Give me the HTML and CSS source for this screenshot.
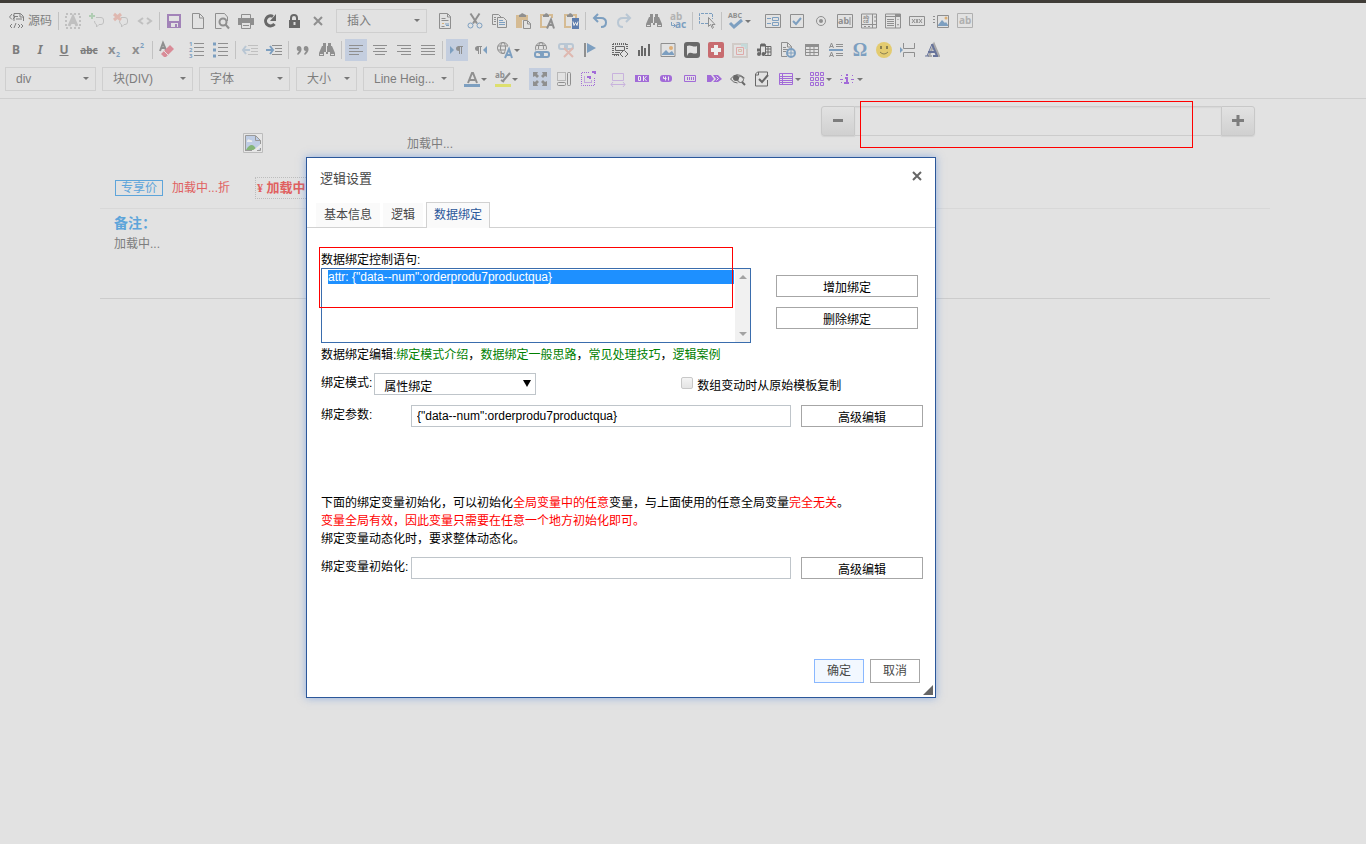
FILE: index.html
```html
<!DOCTYPE html>
<html lang="zh-CN">
<head>
<meta charset="utf-8">
<meta name="viewport" content="width=device-width, initial-scale=1">
<title>逻辑设置</title>
<link rel="stylesheet" href="styles.css">
</head>
<body>
<header class="editor">
  <div class="bar bar-first" role="toolbar" aria-label="文档工具">
    <button class="tool source"><svg viewBox="0 0 16 16"><path d="M5 8V.5h6.500l3 3V8M11 1v3h3M5.500 3.500H9M7 6h6" /><path d="M3 1 .5 4 3 6.500M4 2l2 2-2 2M3 11l-2 2 2 2M7 10l-2 5M9 11l2 2-2 2M12 11l2 2-2 2"/></svg><span>源码</span></button>
    <i class="sep"></i>
    <button class="tool off" aria-label="模板文字"><svg viewBox="0 0 16 16"><path stroke-dasharray="2 2" stroke-width="2" d="M1 1h14v14H1z"/><path stroke-width="3" d="m4 13 4-9 4 9M5.500 9.500h5"/></svg></button>
    <button class="tool off" aria-label="添加批注"><svg viewBox="0 0 16 16"><path d="M7 4.500h5q2.500 0 2.500 2.500v2q0 2.500-2.500 2.500h-2L7.500 14v-2.500Q5.500 11 5.500 8"/><path stroke="#6aae70" stroke-width="2" d="M3 0v6M0 3h6"/></svg></button>
    <button class="tool off" aria-label="删除批注"><svg viewBox="0 0 16 16"><path d="M8 4.500h4q2.500 0 2.500 2.500v2q0 2.500-2.500 2.500h-1L8.500 14v-2.500Q6.500 11 6.500 8"/><path stroke="#dc7b66" stroke-width="3" d="m1 1 7 6M8 1 1 7"/></svg></button>
    <button class="tool off" aria-label="代码"><svg viewBox="0 0 16 16"><path stroke-width="2" d="M6 5 2 8l4 3M10 5l4 3-4 3"/></svg></button>
    <i class="sep"></i>
    <button class="tool" aria-label="保存"><svg viewBox="0 0 16 16"><path fill="#a283b8" stroke="none" fill-rule="evenodd" d="M1 1h14v14H1zM3 3v5h10V3zM5 10v4h4v-3h2v3h1v-4z"/></svg></button>
    <button class="tool" aria-label="新建"><svg viewBox="0 0 16 16"><path d="M2.500.5h7l4 4v11h-11zM9.500 1v4h4"/></svg></button>
    <button class="tool" aria-label="预览"><svg viewBox="0 0 16 16"><path d="M13.500 8V4l-3-3.500h-9v15h6"/><circle cx="9" cy="9" r="3.500" stroke-width="2"/><path stroke-width="2" d="m11.500 11.500 3.500 4"/></svg></button>
    <button class="tool" aria-label="打印"><svg viewBox="0 0 16 16"><path class="f" d="M0 5h16v7h-3v-2H3v2H0z"/><path d="M3.500 5V1.500h9V5M3.500 10v5.500h9V10M5 12.500h6"/></svg></button>
    <button class="tool dark" aria-label="刷新"><svg viewBox="0 0 16 16"><path stroke-width="3" d="M11 3.500A5 5 0 1 0 12.500 11"/><path class="f" d="M14 1v7H8z"/></svg></button>
    <button class="tool dark" aria-label="锁定"><svg viewBox="0 0 16 16"><path stroke-width="2" d="M5 8V5a3 3 0 0 1 6 0v3"/><path class="f" d="M3 7h11v8H3z"/><path stroke="#ddd" stroke-width="2" d="M8.500 9v3"/></svg></button>
    <button class="tool" aria-label="关闭编辑"><svg viewBox="0 0 16 16"><path stroke-width="2" d="m4 4 8 8M12 4l-8 8"/></svg></button>
    <span class="combo combo-mid"><select aria-label="插入"><option>插入</option></select></span>
    <button class="tool" aria-label="模板"><svg viewBox="0 0 16 16"><path d="M2.500.5h8l3 3v12h-11zM10.500 1v3h3M4.500 5.500h4M4.500 7.500h7M4.500 13.500h3"/><path stroke="#7d9fc0" d="M8 11h4M9 12.500h3"/><path stroke="#d6b07c" d="M5 10.500h2"/></svg></button>
    <button class="tool next" aria-label="剪切"><svg viewBox="0 0 16 16"><path stroke-width="2" d="m3.500.5 6.500 10M12.500.5 6 10.500"/><circle class="b" cx="3.500" cy="12.500" r="2.500"/><circle class="b" cx="12.500" cy="12.500" r="2.500"/></svg></button>
    <button class="tool" aria-label="复制"><svg viewBox="0 0 16 16"><path d="M5 11.500H1.500v-10h6L10 4M3 4.500h2M3 6.500h2M3 8.500h2M6.500 4.500h6l3 3v7h-9z"/><path class="b" d="M8 7.500h4M8 9.500h6M8 11.500h6"/></svg></button>
    <button class="tool" aria-label="粘贴"><svg viewBox="0 0 16 16"><path fill="#d5bb93" stroke="none" d="M1 2h12v5H7v8H1z"/><path class="f" d="M4 4V2l2-1 1-1 2 1 2 1v2z"/><path fill="#e2e2e2" d="M8.500 7.500h4l3 3v5h-7zM12.500 8v3h3"/></svg></button>
    <button class="tool" aria-label="粘贴为文本"><svg viewBox="0 0 16 16"><path stroke="#d5bb93" stroke-width="2" d="M5 2H2v12h6M10 2h3v3"/><path class="f" d="M4 4V2l2-1 1-1 2 1 1 1v2z"/><path stroke-width="2" d="m8 15.500 4-9 3 9M9.500 12h4"/></svg></button>
    <button class="tool" aria-label="从 Word 粘贴"><svg viewBox="0 0 16 16"><path stroke="#d5bb93" stroke-width="2" d="M5 2H2v12h6M10 2h3v3"/><path class="f" d="M4 4V2l2-1 1-1 2 1 1 1v2z"/><path fill="#5d7dae" stroke="none" d="M9 5h7v11H9z"/><path stroke="#eee" d="m10 8.500 1 4 1.500-3 1.500 3 1-4"/></svg></button>
    <i class="sep"></i>
    <button class="tool" aria-label="撤销"><svg viewBox="0 0 16 16"><path class="b" stroke-width="2" d="M6 1 2 5l4 4M2 5h7q5 0 5 4.500T9 14"/></svg></button>
    <button class="tool off" aria-label="重做"><svg viewBox="0 0 16 16"><path class="b" stroke-width="2" d="m10 1 4 4-4 4M14 5H7q-5 0-5 4.500T7 14"/></svg></button>
    <button class="tool next" aria-label="查找"><svg viewBox="0 0 16 16"><path class="f" d="M4 1h3v3h2V1h3v3h1l3 7v3h-5v-4H9v2H7v-2H5v4H0v-3l3-7h1z"/><path stroke="#e2e2e2" d="M7.500 3v7M1 12.500h3M12 12.500h3"/></svg></button>
    <button class="tool" aria-label="替换"><svg viewBox="0 0 16 16"><text x="0" y="7" class="tb light" font-size="10">ab</text><text x="5" y="15" class="tb bf" font-size="10">ac</text><path class="b" d="M1.500 9v3.500H5M3.500 10.500l2 2-2 2"/></svg></button>
    <i class="sep"></i>
    <button class="tool" aria-label="全选"><svg viewBox="0 0 16 16"><path class="b" stroke-width="1" stroke-dasharray="3 1" d="M9 10.500H.5V.5h13V6"/><path fill="#e2e2e2" d="M9.500 4.500v9l2-2 2 4 1-1-1.500-3H16z"/></svg></button>
    <i class="sep"></i>
    <button class="tool drop" aria-label="拼写检查"><svg viewBox="0 0 16 16"><text x="0" y="5" class="tb" font-size="7">ABC</text><path class="b" stroke-width="3" d="m2 10 4 4 8-7"/></svg></button>
    <button class="tool next" aria-label="表单"><svg viewBox="0 0 16 16"><path d="M.5 1.500h15v13H.5z"/><path class="b" d="M7.500 4.500h6v3h-6zM7.500 9.500h6v3h-6zM2 5.500h4M2 10.500h4"/></svg></button>
    <button class="tool" aria-label="复选框"><svg viewBox="0 0 16 16"><path d="M1.500 1.500h13v13h-13z"/><path class="b" stroke-width="2" d="m4 8 3 3 5-6"/></svg></button>
    <button class="tool" aria-label="单选按钮"><svg viewBox="0 0 16 16"><circle cx="8" cy="8" r="4.500"/><circle class="f" cx="8" cy="8" r="2"/></svg></button>
    <button class="tool" aria-label="单行文本"><svg viewBox="0 0 16 16"><path d="M.5 1.500h15v13H.5zM13 4v8"/><text x="1" y="11" class="tb" font-size="9">ab</text></svg></button>
    <button class="tool" aria-label="多行文本"><svg viewBox="0 0 16 16"><path d="M.5 1h15v14H.5zM11.500 1v14M1 11.500h14M13 4h2M13 8h2M3 13.500h2M7 13.500h2"/><text x="2" y="6" class="tb" font-size="5">ab</text><text x="2" y="10" class="tb" font-size="5">cd</text></svg></button>
    <button class="tool" aria-label="列表"><svg viewBox="0 0 16 16"><path d="M.5 1h15v14H.5zM1 3.500h10M10.500 1v14M2 6.500h7M2 8.500h7M2 10.500h7M2 12.500h7"/><path class="f" d="M10 1h6v3h-6zM12 7l1-1 1 1zM12 11h2l-1 2z"/></svg></button>
    <button class="tool" aria-label="按钮"><svg viewBox="0 0 16 16"><path d="M.5 3.500h15v9H.5zM3 6l3 4M6 6l-3 4M7 6l2 4M9 6l-2 4M10 6l3 4M13 6l-3 4"/></svg></button>
    <button class="tool" aria-label="图像按钮"><svg viewBox="0 0 16 16"><path d="M4.500 2.500h11v12h-11zM0 3.500h2M0 6.500h2M0 9.500h2"/><path fill="#7d9fc0" stroke="none" d="m5 12 4-5 3 3 1-1 2 3v1H5z"/><circle cx="13" cy="5" r="1.500" fill="#dcae72" stroke="none"/></svg></button>
    <button class="tool mute" aria-label="隐藏域"><svg viewBox="0 0 16 16"><path d="M.5.5h15v14H.5z"/><text x="2" y="11" class="tb" font-size="10">ab</text></svg></button>
  </div>

  <div class="bar" role="toolbar" aria-label="格式工具">
    <button class="tool letter" aria-label="加粗"><b>B</b></button>
    <button class="tool letter" aria-label="倾斜"><em>I</em></button>
    <button class="tool letter" aria-label="下划线"><u>U</u></button>
    <button class="tool letter wide" aria-label="删除线"><s>abc</s></button>
    <button class="tool" aria-label="下标"><svg viewBox="0 0 16 16"><text x="2" y="12" class="tb" font-size="13">x</text><text x="10" y="15" class="tb bf" font-size="7">2</text></svg></button>
    <button class="tool" aria-label="上标"><svg viewBox="0 0 16 16"><text x="2" y="12" class="tb" font-size="13">x</text><text x="10" y="6" class="tb bf" font-size="7">2</text></svg></button>
    <i class="sep"></i>
    <button class="tool" aria-label="清除格式"><svg viewBox="0 0 16 16"><path stroke-width="2" d="m1 9 3-8 3 7M2 6h4"/><path fill="#d98b97" stroke="none" d="m2 12 9-9 4 4-8 8H5z"/><path stroke="#e2e2e2" d="m5 9 4 4"/></svg></button>
    <button class="tool next" aria-label="编号列表"><svg viewBox="0 0 16 16"><path d="M5 1.500h10M5 5.500h10M5 9.500h10M5 13.500h10"/><text x="0" y="4" class="tb bf" font-size="6">1</text><text x="0" y="10" class="tb bf" font-size="6">2</text><text x="0" y="16" class="tb bf" font-size="6">3</text></svg></button>
    <button class="tool" aria-label="项目列表"><svg viewBox="0 0 16 16"><path d="M5 1.500h10M5 5.500h10M5 9.500h10M5 13.500h10"/><path class="b" stroke-width="3" d="M0 2h3M0 8h3M0 14h3"/></svg></button>
    <i class="sep"></i>
    <button class="tool off" aria-label="减少缩进"><svg viewBox="0 0 16 16"><path d="M6 3.500h10M9 6.500h7M9 9.500h7M6 12.500h10"/><path class="b" stroke-width="2" d="M4 4 1 8l3 4M1 8h7"/></svg></button>
    <button class="tool" aria-label="增加缩进"><svg viewBox="0 0 16 16"><path d="M6 3.500h10M9 6.500h7M9 9.500h7M6 12.500h10"/><path class="b" stroke-width="2" d="m4 4 3 4-3 4M0 8h7"/></svg></button>
    <i class="sep"></i>
    <button class="tool" aria-label="引用"><svg viewBox="0 0 16 16"><path class="f" d="M2 5q2-2 4 0 2 4-3 8l-1-1 2-3q-3 0-2-4zM9 5q2-2 4 0 2 4-3 8l-1-1 2-3q-3 0-2-4z"/></svg></button>
    <button class="tool" aria-label="查找内容"><svg viewBox="0 0 16 16"><path class="f" d="M4 1h3v3h2V1h3v3h1l3 7v3h-5v-4H9v2H7v-2H5v4H0v-3l3-7h1z"/><path stroke="#e2e2e2" d="M7.500 3v7M1 12.500h3M12 12.500h3"/></svg></button>
    <i class="sep"></i>
    <button class="tool on" aria-label="左对齐"><svg viewBox="0 0 16 16"><path d="M1 3.500h14M1 6.500h10M1 9.500h14M1 12.500h10"/></svg></button>
    <button class="tool" aria-label="居中"><svg viewBox="0 0 16 16"><path d="M1 3.500h14M3 6.500h10M1 9.500h14M3 12.500h10"/></svg></button>
    <button class="tool" aria-label="右对齐"><svg viewBox="0 0 16 16"><path d="M1 3.500h14M5 6.500h10M1 9.500h14M5 12.500h10"/></svg></button>
    <button class="tool" aria-label="两端对齐"><svg viewBox="0 0 16 16"><path d="M1 3.500h14M1 6.500h14M1 9.500h14M1 12.500h14"/></svg></button>
    <i class="sep"></i>
    <button class="tool on" aria-label="从左到右"><svg viewBox="0 0 16 16"><path class="bfill" d="m1 4 4 4-4 4z"/><path class="f" d="M9 4h5v1H9zM10 4v5q-3 0-3-2.500T10 4z"/><path d="M10.500 4v8M12.500 4v8"/></svg></button>
    <button class="tool" aria-label="从右到左"><svg viewBox="0 0 16 16"><path class="bfill" d="m14 4-4 4 4 4z"/><path class="f" d="M4 4h5v1H4zM5 4v5Q2 9 2 6.500T5 4z"/><path d="M5.500 4v8M7.500 4v8"/></svg></button>
    <button class="tool drop" aria-label="语言"><svg viewBox="0 0 16 16"><circle cx="6" cy="6" r="5.500"/><ellipse cx="6" cy="6" rx="2.500" ry="5.500"/><path d="M1 4h10M1 8h7"/><path stroke="#e2e2e2" stroke-width="4" d="m8 16 4-9 3 9"/><path class="b" stroke-width="2" d="m8 16 4-9 3 9M9 13h5"/></svg></button>
    <button class="tool next" aria-label="插入链接"><svg viewBox="0 0 16 16"><circle cx="7" cy="6" r="5.500"/><ellipse cx="7" cy="6" rx="2.500" ry="5.500"/><path d="M2 3.500h10M2 7.500h10"/><path stroke="#e2e2e2" stroke-width="3" d="M2 9h13"/><rect class="b" x="1" y="10" width="8" height="5" rx="2" stroke-width="2"/><rect class="b" x="7" y="10" width="8" height="5" rx="2" stroke-width="2"/></svg></button>
    <button class="tool off" aria-label="取消链接"><svg viewBox="0 0 16 16"><rect class="b" x="1" y="2" width="8" height="5" rx="2" stroke-width="2"/><rect class="b" x="7" y="2" width="8" height="5" rx="2" stroke-width="2"/><path stroke="#dc7b66" stroke-width="2" d="m6 6 9 9M15 6l-9 9"/></svg></button>
    <button class="tool" aria-label="锚点"><svg viewBox="0 0 16 16"><path stroke-width="2" d="M3 1v14"/><path class="bfill" d="m5 1 9 5-9 5z"/></svg></button>
    <button class="tool dark next" aria-label="容器"><svg viewBox="0 0 16 16"><path stroke-width="2" stroke-dasharray="1 1" d="M1 2h14v5M1 2v11h7"/><path d="M3.500 4.500h9v4h-9zM3 10.500h5M3 12.500h4M11 9l-3 3 3 3M13 9l3 3-3 3"/></svg></button>
    <button class="tool dark" aria-label="图表"><svg viewBox="0 0 16 16"><path stroke-width="2" d="M3 8v6M6 4v10M9 6v8M13 2v12"/></svg></button>
    <button class="tool" aria-label="图片"><svg viewBox="0 0 16 16"><path d="M1 1.500h14v13H1z"/><path class="bfill" d="m2 12 4-4 3 3 3-2 2 3v1H2z"/><circle cx="11" cy="6" r="2" fill="#dfae75" stroke="none"/></svg></button>
    <button class="tool dark" aria-label="标记"><svg viewBox="0 0 16 16"><rect class="f" width="16" height="16" rx="3"/><path fill="#e2e2e2" stroke="none" d="M3 4q2-1 5 0t5 0v7q-2 1-5 0t-4 1l-1 2z"/></svg></button>
    <button class="tool" aria-label="添加模块"><svg viewBox="0 0 16 16"><rect fill="#c86c70" stroke="none" width="16" height="16" rx="2"/><path stroke="#eee" stroke-width="4" d="M8 3v10M3 8h10"/></svg></button>
    <button class="tool off" aria-label="图层"><svg viewBox="0 0 16 16"><path stroke="#b9a99f" stroke-width="2" d="M1 2h14v13H1z"/><path stroke="#9cc" stroke-width="3" d="M9 3h5v4"/><path stroke="#d55" d="M4.500 5.500h7v7h-7z"/><path stroke="#c85" d="M6.500 7.500h3v2h-3z"/></svg></button>
    <button class="tool dark" aria-label="媒体"><svg viewBox="0 0 16 16"><path d="M4.500 12V2.500h5V12M9.500 4.500H15v9H9M12 5v8M10 7h5M10 10h5"/><circle class="f" cx="3" cy="12" r="2"/><circle class="f" cx="7.500" cy="12" r="2"/><path stroke-width="3" d="M5 3h4M1 8h3"/></svg></button>
    <button class="tool" aria-label="网页文件"><svg viewBox="0 0 16 16"><path d="M7 14.500H1.500V.5h6l4 4V7M7.500 1v4h4M3 5.500h3M3 7.500h5M3 9.500h3"/><circle class="b" cx="11" cy="11" r="4" stroke-width="2"/><path class="b" d="M7 11h8M11 7v8"/></svg></button>
    <button class="tool" aria-label="表格"><svg viewBox="0 0 16 16"><path d="M1.500 2.500h13v11h-13zM2 7.500h12M2 10.500h12M6 5v9M10 5v9"/><path class="f" d="M1 2h14v3H1z"/></svg></button>
    <button class="tool" aria-label="水平线"><svg viewBox="0 0 16 16"><path d="m1.500 6 2-5 2 5M2 4.500h3M1.500 15l2-5 2 5M2 13.500h3M8 2.500h7M8 4.500h7M8 11.500h7M8 13.500h7"/><path class="b" stroke-width="2" d="M1 8h14"/></svg></button>
    <button class="tool omega" aria-label="特殊符号">Ω</button>
    <button class="tool" aria-label="表情"><svg viewBox="0 0 16 16"><circle cx="8" cy="8" r="8" fill="#e3cb70" stroke="none"/><path stroke="#8a7f50" stroke-width="2" d="M5 4v3M11 4v3"/><path stroke="#8a7f50" d="M4 10q4 4 8 0"/></svg></button>
    <button class="tool" aria-label="分页"><svg viewBox="0 0 16 16"><path d="M3.500 1v5.500h11V1M3.500 15v-4.500h11V15"/><path class="bfill" d="m0 5 3 3-3 3z"/></svg></button>
    <button class="tool" aria-label="字体样式"><svg viewBox="0 0 16 16"><path stroke="#a9a9a9" stroke-width="2" d="m5 14 5-12 5 12M7 10h7M4 14h4M12 14h4"/><path stroke="#68749a" stroke-width="2" d="M8 2 13 14M4 10h7M9 14h5"/><path stroke="#68749a" d="M8 2 3 14M1 14h4"/></svg></button>
  </div>

  <div class="bar" role="toolbar" aria-label="样式工具">
    <div class="combos">
      <span class="combo"><select aria-label="标签"><option>div</option></select></span>
      <span class="combo"><select aria-label="段落格式"><option>块(DIV)</option></select></span>
      <span class="combo"><select aria-label="字体"><option>字体</option></select></span>
      <span class="combo combo-size"><select aria-label="大小"><option>大小</option></select></span>
      <span class="combo"><select aria-label="行高"><option>Line Heig...</option></select></span>
    </div>
    <button class="tool drop after" aria-label="文字颜色"><svg viewBox="0 0 16 16"><path stroke-width="2" d="m4 12 4-10h1l4 10M5 9h6"/><path class="b" stroke-width="3" d="M0 14.500h16"/></svg></button>
    <button class="tool drop" aria-label="背景颜色"><svg viewBox="0 0 16 16"><text x="0" y="7" font-size="8" class="tb">ab</text><path stroke-width="2" d="m15 2-7 8M6 9l3 2"/><path stroke="#dddf6e" stroke-width="3" d="M0 14.500h16"/></svg></button>
    <button class="tool on next" aria-label="最大化"><svg viewBox="0 0 16 16"><path class="f" d="M1 1h5L5 3l2 2-2 2-2-2-2 1zM15 1v5l-2-1-2 2-2-2 2-2-1-2zM1 15v-5l2 1 2-2 2 2-2 2 1 2zM15 15h-5l1-2-2-2 2-2 2 2 2-1z"/></svg></button>
    <button class="tool" aria-label="显示区块"><svg viewBox="0 0 16 16"><path stroke-dasharray="1 1" d="M1.500 1.500h8v8h-8z"/><rect x="1.500" y="11.500" width="8" height="3" rx="1"/><rect x="11.500" y="1.500" width="3" height="13" rx="1"/></svg></button>
    <button class="tool" aria-label="定位"><svg viewBox="0 0 16 16"><path class="p" stroke-dasharray="1 1" d="M9 1.500H1.500v13h13V7M4.500 5.500v6h7v-3"/><path class="p" stroke-width="2" d="M12 1h3v2M7 6h3v2"/></svg></button>
    <button class="tool off next" aria-label="宽度"><svg viewBox="0 0 16 16"><path class="p" d="M2.500 2.500h11v7h-11zM1 13.500h14M3 11l-2 2.500L3 16M13 11l2 2.500-2 2.500"/></svg></button>
    <button class="tool" aria-label="确认按钮"><svg viewBox="0 0 16 16"><path class="pf" d="M1 4h14v7H1z"/><path stroke="#eee" d="M4.500 5.500h2v4h-2zM9.500 5v5M12.500 5l-2 2.500 2 2.500"/></svg></button>
    <button class="tool" aria-label="圆形按钮"><svg viewBox="0 0 16 16"><rect class="pf" x="2" y="4" width="12" height="7" rx="3"/><path stroke="#eee" d="M5.500 5.500v2h3M7.500 5.500v4M10.500 5.500v4"/></svg></button>
    <button class="tool" aria-label="文本域"><svg viewBox="0 0 16 16"><path class="p" d="M2.500 4.500h11v6h-11zM5.500 6v3M7.500 6v3M9.500 6v3M11.500 6v3"/></svg></button>
    <button class="tool" aria-label="流程"><svg viewBox="0 0 16 16"><path class="pf" d="M1 4h4l3 4-3 3H1zM7 4h5l4 4-4 3H7l3-3z"/><path stroke="#eee" d="m10.500 5.500 2 2-2 2"/></svg></button>
    <button class="tool dark" aria-label="检查"><svg viewBox="0 0 16 16"><path d="M.5 8q6-8 14-1M.5 8q3 4 7 4"/><circle class="f" cx="6" cy="7" r="3"/><circle cx="10.500" cy="8.500" r="3"/><path stroke-width="2" d="m12 11 3 3"/></svg></button>
    <button class="tool dark" aria-label="校验"><svg viewBox="0 0 16 16"><path d="M13.500 9v6h-12V3l2-2h10v3M4.500 1v3h-3"/><path stroke-width="2" d="m5 8 3 3 6-7"/></svg></button>
    <button class="tool drop" aria-label="数据表"><svg viewBox="0 0 16 16"><path class="p" d="M1.500 2.500h13v11h-13zM4.500 3v10M2 5.500h12M2 7.500h12M2 9.500h12M2 11.500h12"/></svg></button>
    <button class="tool drop" aria-label="网格"><svg viewBox="0 0 16 16"><path class="p" d="M1.500 1.500h3v3h-3zM6.500 1.500h3v3h-3zM11.500 1.500h3v3h-3zM1.500 6.500h3v3h-3zM6.500 6.500h3v3h-3zM11.500 6.500h3v3h-3zM1.500 11.500h3v3h-3zM6.500 11.500h3v3h-3zM11.500 11.500h3v3h-3z"/></svg></button>
    <button class="tool drop" aria-label="信息"><svg viewBox="0 0 16 16"><path class="p" stroke-width="2" d="M6 4h2M5 7h2v5M4 12h5"/><path class="p" d="m1 4 1 1M0 8.500h3M1 12l1-1M12 5l1-1M11 8.500h3M12 11l1 1"/></svg></button>
  </div>
</header>

<main class="page">
  <section class="product">
    <div class="thumb"><svg viewBox="0 0 20 20" role="img" aria-label="图片"><path stroke="#bcbcbc" fill="#e6e6e6" d="M.5.5h19v19H.5z"/><path fill="#bfcde4" stroke="none" d="M3 3h10l4 4v10H3z"/><path fill="#eee" stroke="none" d="M4 8q1-3 3-1 3 0 2 2H4z"/><path fill="#84b578" stroke="none" d="M3 17q4-7 8-4l3 4z"/><path fill="#e8e8e8" stroke="none" d="m9 18 9-7v3l-4 4z"/><path fill="none" stroke="#999" d="M2.500 17.500v-15h10l5 5V11M12.500 3v4.500h5M2 17.500h7M17.500 15v2.500H14"/></svg></div>
    <div class="name">加载中...</div>
    <div class="stepper">
      <button class="step" aria-label="减少"><svg viewBox="0 0 12 12"><path stroke-width="3" d="M1 6.500h10"/></svg></button>
      <input type="text" aria-label="数量">
      <button class="step" aria-label="增加"><svg viewBox="0 0 12 12"><path stroke-width="3" d="M0 6.500h12M6 1v11"/></svg></button>
    </div>
    <div class="prices">
      <span class="tag">专享价</span>
      <span class="discount">加载中...折</span>
      <span class="price"><small>¥</small> 加载中...</span>
    </div>
  </section>
  <section class="remark">
    <h2>备注：</h2>
    <p>加载中...</p>
  </section>
</main>

<div class="mark mark-stepper"></div>

<div class="dialog" role="dialog" aria-labelledby="dialog-title">
  <div class="dialog-head">
    <h1 id="dialog-title">逻辑设置</h1>
    <button class="close" aria-label="关闭"><svg viewBox="0 0 10 10"><path stroke-width="2" d="m1 1 8 8M9 1 1 9"/></svg></button>
  </div>
  <div class="tabs" role="tablist">
    <button class="tab" role="tab" aria-selected="false">基本信息</button>
    <button class="tab" role="tab" aria-selected="false">逻辑</button>
    <button class="tab active" role="tab" aria-selected="true">数据绑定</button>
  </div>
  <div class="dialog-body">
    <div class="bindings">
      <div class="binding-list">
        <label for="bindings">数据绑定控制语句:</label>
        <div class="listbox">
          <select id="bindings" size="4"><option selected>attr: {"data--num":orderprodu7productqua}</option></select>
          <span class="scroll" aria-hidden="true"></span>
        </div>
      </div>
      <div class="binding-actions">
        <button class="btn">增加绑定</button>
        <button class="btn">删除绑定</button>
      </div>
    </div>
    <p class="help">数据绑定编辑:<a href="#">绑定模式介绍</a>，<a href="#">数据绑定一般思路</a>，<a href="#">常见处理技巧</a>，<a href="#">逻辑案例</a></p>
    <div class="row mode-row">
      <label for="mode">绑定模式:</label>
      <span class="mode"><select id="mode"><option>属性绑定</option></select></span>
      <div class="copy"><input type="checkbox" id="copy"><label for="copy">数组变动时从原始模板复制</label></div>
    </div>
    <div class="row field-row">
      <label for="param">绑定参数:</label>
      <input type="text" id="param" value='{"data--num":orderprodu7productqua}'>
      <button class="btn">高级编辑</button>
    </div>
    <div class="notes">
      <p>下面的绑定变量初始化，可以初始化<em>全局变量中的任意</em>变量，与上面使用的任意全局变量<em>完全无关</em>。</p>
      <p><em>变量全局有效，因此变量只需要在任意一个地方初始化即可。</em></p>
      <p>绑定变量动态化时，要求整体动态化。</p>
    </div>
    <div class="row field-row">
      <label for="init">绑定变量初始化:</label>
      <input type="text" id="init">
      <button class="btn">高级编辑</button>
    </div>
  </div>
  <div class="dialog-foot">
    <button class="btn ok">确定</button>
    <button class="btn cancel">取消</button>
  </div>
  <i class="grip"></i>
  <div class="mark mark-list"></div>
</div>
</body>
</html>
```
FILE: styles.css
```css
* { box-sizing: border-box; }
body {
  margin: 0;
  min-height: 100vh;
  background: #e2e2e2;
  color: #7d7d7d;
  font: 12px/18px "Liberation Sans", "Noto Sans CJK SC", sans-serif;
}
button, input, select { font: inherit; color: inherit; margin: 0; }
button { cursor: pointer; }
h1, h2, p { margin: 0; font-weight: normal; }
svg { display: block; fill: none; stroke: currentColor; overflow: visible; }

/* Editor toolbars */
.editor {
  display: flex;
  flex-direction: column;
  gap: 5px;
  padding: 6px 5px 7px;
  border-top: 3px solid #403d38;
  border-bottom: 1px solid #cfcfcf;
}
.bar { display: flex; align-items: center; gap: 2px; height: 24px; }
.bar-first { padding-left: 1px; }
.tool {
  flex: none;
  display: flex;
  align-items: center;
  justify-content: center;
  width: 22px;
  height: 22px;
  padding: 0;
  border: 0;
  background: none;
  color: #8f8f8f;
}
.tool svg { flex: none; width: 16px; height: 16px; }
.tool text { stroke: none; fill: currentColor; }
.tool text.light { fill: #b3b3b3; }
.tool.source { width: 49px; gap: 3px; color: #808080; }
.tool.off { opacity: 0.4; }
.tool.dark { color: #686868; }
.tool.mute { color: #b0b0b0; }
.tool.on { background: #c4cedf; }
.tool.next { margin-left: 6px; }
.tool.after { margin-left: 5px; }
.tool.letter { font: 12px/22px "Noto Sans", sans-serif; color: #7d7d7d; }
.tool.letter b, .tool.letter em, .tool.letter u { font-weight: bold; }
.tool.letter.wide { width: 24px; font-size: 10px; font-weight: bold; }
.tool.omega { font: bold 18px/22px "Liberation Serif", serif; color: #7d9fc0; }
.tool.drop { width: 29px; gap: 1px; }
.tool.drop::after, .combo::after {
  content: "";
  border: 3px solid transparent;
  border-top-color: #777;
  border-bottom: 0;
}
.tool .f { fill: currentColor; stroke: none; }
.tool .b { stroke: #7d9fc0; }
.tool .bfill { fill: #7d9fc0; stroke: none; }
.tool .p { stroke: #a26bd8; }
.tool .pf { fill: #a26bd8; stroke: none; }
.tool .tb { font-family: "Noto Sans", sans-serif; font-weight: bold; }
.tool .bf { fill: #7d9fc0; }
.sep { flex: none; width: 1px; height: 18px; margin: 0 1px; background: #c2c2c2; }
.combos { display: flex; gap: 6px; }
.combo { position: relative; flex: none; width: 91px; height: 24px; }
.combo-mid { margin: 0 5px; }
.combo-size { width: 61px; }
.combo select {
  appearance: none;
  width: 100%;
  height: 24px;
  padding: 0 10px;
  border: 1px solid #cfcfcf;
  border-radius: 0;
  background: transparent;
}
.combo::after { position: absolute; right: 7px; top: 10px; pointer-events: none; }

/* Page being edited */
.page { margin: 0 96px 0 100px; }
.product {
  display: grid;
  grid-template-columns: 307px 1fr 434px;
  grid-template-rows: 71px 1fr;
  height: 110px;
  padding-right: 15px;
  border-bottom: 1px solid #d8d8d8;
}
.thumb { padding: 34px 0 0 143px; }
.thumb svg { width: 20px; height: 20px; }
.name { padding-top: 36px; }
.stepper { display: flex; height: 30px; margin-top: 7px; }
.stepper input {
  flex: 1;
  min-width: 0;
  padding: 0 8px;
  border: 1px solid #cccccc;
  border-width: 1px 0;
  background: transparent;
  box-shadow: inset 0 1px 1px #d8d8d8;
}
.step {
  display: flex;
  align-items: center;
  justify-content: center;
  width: 34px;
  padding: 0 0 2px;
  border: 1px solid #c8c8c8;
  background: linear-gradient(#e2e2e2, #d0d0d0);
  box-shadow: 0 1px 1px #d3d3d3;
}
.step:first-child { border-radius: 3px 0 0 3px; }
.step:last-child { border-radius: 0 3px 3px 0; }
.step svg { width: 12px; height: 12px; }
.prices {
  grid-column: 1 / -1;
  display: flex;
  align-items: center;
  align-self: start;
  height: 36px;
  padding-left: 15px;
  color: #e0605f;
}
.tag {
  width: 48px;
  margin-right: 9px;
  border: 1px solid #5ea5da;
  color: #5ea5da;
  line-height: 14px;
  text-align: center;
}
.discount { width: 83px; }
.price { padding: 0 1px; border: 1px dotted #bdbdbd; font: bold 13px/20px "Liberation Sans", "Noto Sans CJK SC", sans-serif; }
.price small { font: bold 12px/20px "Liberation Serif", serif; }
.remark { height: 90px; padding: 4px 14px; border-bottom: 1px solid #cccccc; }
.remark h2 { color: #5ea5da; font-size: 14px; font-weight: bold; line-height: 20px; }
.remark p { padding-top: 2px; }

/* Red callout frames */
.mark { position: absolute; border: 1px solid #ff0000; pointer-events: none; }
.mark-stepper { left: 860px; top: 101px; width: 333px; height: 47px; }
.mark-list { left: 12px; top: 89px; width: 414px; height: 61px; }

/* Dialog */
.dialog {
  position: absolute;
  left: 306px;
  top: 157px;
  width: 630px;
  border: 1px solid #2b579a;
  background: #ffffff;
  box-shadow: 0 0 8px rgba(68, 125, 220, 0.5);
  color: #000000;
}
.dialog-head { display: flex; justify-content: space-between; height: 44px; padding: 12px 13px; }
.dialog-head h1 { color: #484848; font-size: 13px; line-height: 18px; }
.close { width: 10px; height: 12px; padding: 1px 0; border: 0; background: none; color: #666666; }
.close svg { width: 10px; height: 10px; }
.tabs { display: flex; align-items: flex-end; gap: 3px; height: 26px; padding-left: 9px; border-bottom: 1px solid #d1d1d1; }
.tab { height: 24px; padding: 0 8px; border: 0; background: #fafafa; color: #484848; line-height: 24px; }
.tab.active {
  height: 26px;
  margin-bottom: -1px;
  padding: 0 7px 2px;
  border: 1px solid #d1d1d1;
  border-bottom: 0;
  color: #2b579a;
  line-height: 22px;
}
.dialog-body { padding: 24px 12px 0 14px; }
.bindings { display: flex; gap: 25px; }
.binding-list { display: flex; flex-direction: column; width: 430px; }
.binding-list label { line-height: 16px; }
.listbox {
  display: flex;
  height: 75px;
  border: 1px solid #3a6dad;
  background: #ffffff;
}
.listbox select {
  flex: 1;
  min-width: 0;
  padding: 0 1px 0 6px;
  border: 0;
  outline: none;
  background: transparent;
}
.listbox option { min-height: 14px; margin-top: 1px; padding: 0; line-height: 14px; }
.listbox option:checked {
  background: #1e90ff linear-gradient(#1e90ff, #1e90ff);
  color: #ffffff;
  -webkit-text-fill-color: #ffffff;
}
.scroll {
  display: flex;
  flex-direction: column;
  align-items: center;
  justify-content: space-between;
  width: 15px;
  padding: 6px 0;
  background: #f1f1f1;
}
.scroll::before, .scroll::after { content: ""; border: 4px solid transparent; }
.scroll::before { border-top: 0; border-bottom-color: #a3a3a3; }
.scroll::after { border-bottom: 0; border-top-color: #a3a3a3; }
.binding-actions { display: flex; flex-direction: column; gap: 10px; width: 142px; padding-top: 23px; }
.btn { height: 22px; padding: 4px 0 0; border: 1px solid #a6a6a6; background: #ffffff; line-height: 16px; }
.help { margin-top: 3px; }
.help a { color: #008000; text-decoration: none; }
.row { display: flex; margin-top: 10px; }
.mode-row { height: 22px; margin-top: 9px; }
.mode-row > label { line-height: 20px; }
.mode { position: relative; width: 162px; margin-left: 2px; }
.mode select {
  appearance: none;
  width: 100%;
  height: 22px;
  padding: 4px 9px 0;
  border: 1px solid #bfc5ca;
  border-radius: 0;
  background: #ffffff;
}
.mode::after {
  content: "";
  position: absolute;
  right: 5px;
  top: 7px;
  border: 4px solid transparent;
  border-top: 7px solid #000000;
  border-bottom: 0;
  pointer-events: none;
}
.copy { display: flex; gap: 4px; margin-left: 145px; }
.copy input {
  appearance: none;
  width: 12px;
  height: 12px;
  margin-top: 4px;
  border: 1px solid #c8c8c8;
  border-radius: 2px;
  background: linear-gradient(#f4f4f4, #e4e4e4);
}
.copy label { line-height: 26px; }
.field-row label { width: 90px; line-height: 20px; }
.field-row input { flex: 1; min-width: 0; height: 22px; padding: 0 5px; border: 1px solid #bfc5ca; border-radius: 0; }
.field-row .btn { width: 122px; margin-left: 10px; }
.notes { margin-top: 67px; }
.notes em { color: #ff0000; font-style: normal; }
.notes + .row { margin-top: 9px; }
.dialog-foot { display: flex; justify-content: flex-end; gap: 6px; padding: 80px 15px 14px; }
.dialog-foot .btn { width: 50px; height: 24px; padding: 0; color: #484848; }
.dialog-foot .ok { border-color: #8ab8ff; background: #f2f8ff; }
.grip {
  position: absolute;
  right: 2px;
  bottom: 2px;
  border: 5px solid #666666;
  border-top-color: transparent;
  border-left-color: transparent;
}
```
